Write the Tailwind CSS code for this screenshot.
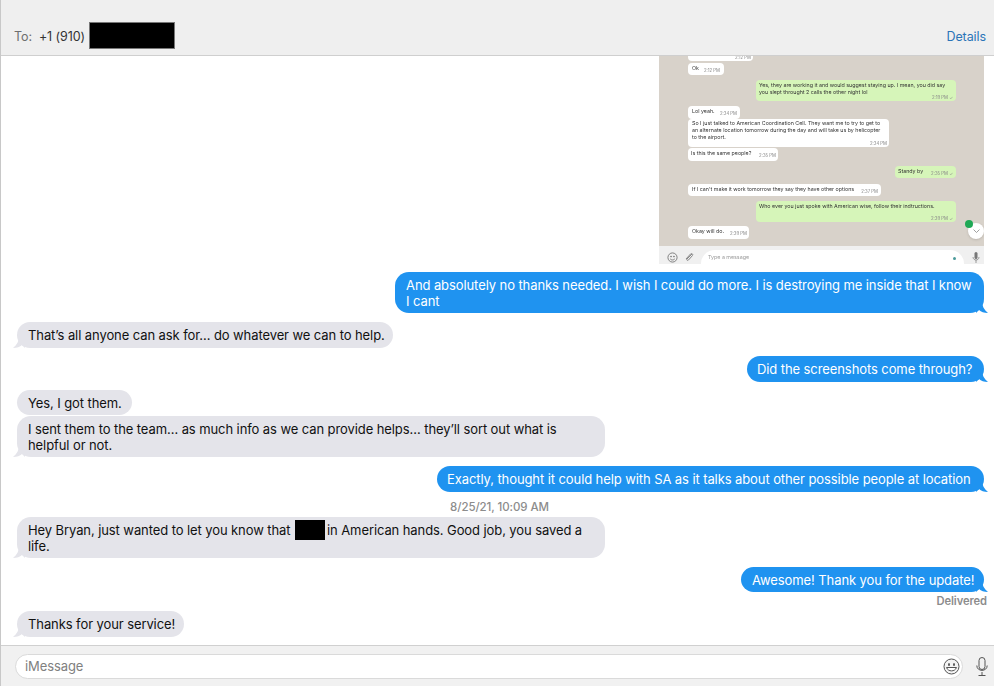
<!DOCTYPE html>
<html lang="en">
<head>
    <meta charset="UTF-8">
    <meta name="viewport" content="width=device-width, initial-scale=1.0">
    <title>Messages</title>
    <script src="https://cdn.jsdelivr.net/npm/@tailwindcss/browser@4"></script>
</head>
<body class="bg-white font-['Inter',sans-serif] text-[13px] leading-[16px] tracking-[-0.09px] text-[#111] overflow-hidden">
<div class="w-[994px] h-[686px] flex flex-col border-l border-[#c8c8c8] overflow-hidden">
    <!-- Header -->
    <header class="h-[56px] shrink-0 bg-[#efefef] border-b border-[#cfcfcf] flex items-end pl-[13px] pr-[8px] pb-[6px]">
        <span class="text-[12.500px] text-[#6e6e6e] mb-[4px] mr-[7px]">To:</span>
        <span class="text-[12.500px] text-[#333] mb-[4px] mr-[4px]">+1 (910)</span>
        <span class="w-[86px] h-[27px] bg-black border border-[#777]"></span>
        <a class="ml-auto text-[12.500px] text-[#2a74b8] mb-[4px]">Details</a>
    </header>

    <!-- Conversation -->
    <main class="h-[589px] shrink-0 flex flex-col pl-[16px] pr-[10px] overflow-hidden">
        <!-- Attached screenshot -->
        <div class="relative self-end w-[325px] h-[208px] shrink-0 bg-[#d8d2ca] overflow-hidden flex flex-col text-[5.300px] leading-[7px] tracking-normal text-[#333] blur-[0.500px]">
            <div class="flex-1 flex flex-col pl-[29px] pr-[28px]">
                <div class="self-start w-[65px] h-[5px] bg-white rounded-b-sm text-right text-[4.300px] leading-[4px] pr-[2px] text-[#888]">2:12 PM</div>
                <div class="self-start mt-[2px] w-[36px] h-[12px] bg-white rounded-sm px-[4px] py-[2px] flex justify-between"><span>Ok</span><span class="text-[4.300px] text-[#888] mt-[2px]">2:12 PM</span></div>
                <div class="self-end mt-[5px] w-[200px] h-[21px] bg-[#d6f5b9] rounded-sm pl-[3px] pt-[2px] relative whitespace-nowrap">Yes, they are working it and would suggest staying up. I mean, you did say<br>you slept throught 2 calls the other night lol<span class="absolute right-[3px] bottom-[1px] text-[4.300px] leading-[5px] text-[#888]">2:19 PM ✓</span></div>
                <div class="self-start mt-[5px] w-[52px] h-[13px] bg-white rounded-sm pl-[4px] pt-[2px] flex justify-between pr-[3px]"><span>Lol yeah.</span><span class="text-[4.300px] text-[#888] mt-[2px]">2:34 PM</span></div>
                <div class="self-start w-[201px] h-[28px] bg-white rounded-sm pl-[4px] pt-[1px] relative whitespace-nowrap">So I just talked to American Coordination Cell. They want me to try to get to<br>an alternate location tomorrow during the day and will take us by helicopter<br>to the airport.<span class="absolute right-[2px] bottom-[1px] text-[4.300px] leading-[5px] text-[#888]">2:34 PM</span></div>
                <div class="self-start mt-[1px] w-[90px] h-[13px] bg-white rounded-sm pl-[3px] pt-[2px] flex justify-between pr-[2px]"><span>Is this the same people?</span><span class="text-[4.300px] text-[#888] mt-[2px]">2:35 PM</span></div>
                <div class="self-end mt-[5px] w-[61px] h-[12px] bg-[#d6f5b9] rounded-sm pl-[3px] pt-[2px] flex justify-between pr-[3px]"><span>Standy by</span><span class="text-[4.300px] text-[#888] mt-[2px]">2:35 PM ✓</span></div>
                <div class="self-start mt-[6px] w-[193px] h-[12px] bg-white rounded-sm pl-[4px] pt-[2px] flex justify-between pr-[3px] whitespace-nowrap"><span>If I can't make it work tomorrow they say they have other options</span><span class="text-[4.300px] text-[#888] mt-[2px]">2:37 PM</span></div>
                <div class="self-end mt-[5px] w-[200px] h-[21px] bg-[#d6f5b9] rounded-sm pl-[3px] pt-[2px] relative whitespace-nowrap">Who ever you just spoke with American wise, follow their indtructions.<span class="absolute right-[3px] bottom-[1px] text-[4.300px] leading-[5px] text-[#888]">2:39 PM ✓</span></div>
                <div class="self-start mt-[4px] w-[61px] h-[13px] bg-white rounded-sm pl-[4px] pt-[2px] flex justify-between pr-[2px]"><span>Okay will do.</span><span class="text-[4.300px] text-[#888] mt-[2px]">2:39 PM</span></div>
            </div>
            <div class="h-[18px] shrink-0 bg-[#f0f0f0] flex items-end pl-[8px]">
                <svg width="11" height="11" viewBox="0 0 12 12" fill="none" stroke="#777" class="mb-[1px]"><circle cx="6" cy="6" r="5"/><circle cx="4.400" cy="5" r=".5" fill="#777"/><circle cx="7.600" cy="5" r=".5" fill="#777"/><path d="M3.500 7.500c1.200 1.600 3.800 1.600 5 0"/></svg>
                <svg width="10" height="10" viewBox="0 0 10 10" fill="none" stroke="#888" class="ml-[6px] mb-[2px]"><path d="M8 2 3 7c-1 1 .5 2 1.500 1l4-4.500c1-1.500-1-2.500-2-1.500L2 7"/></svg>
                <div class="ml-[7px] w-[263px] h-[14px] bg-white rounded-t-full pl-[7px] text-[#999] leading-[14px] relative">Type a message<span class="absolute right-[8px] top-[7px] w-[3px] h-[3px] rounded-full bg-[#4a9a9a]"></span></div>
                <svg width="8" height="11" viewBox="0 0 8 11" fill="#777" class="ml-[8px] mb-[1px]"><rect x="2.500" width="3" height="7" rx="1.500"/><path d="M1 5c0 4 6 4 6 0M4 8v3" fill="none" stroke="#777" stroke-width=".7"/></svg>
            </div>
            <div class="absolute left-[309px] top-[167px] w-[16px] h-[16px] rounded-full bg-white flex items-center justify-center shadow-sm">
                <svg width="7" height="4" viewBox="0 0 7 4" fill="none" stroke="#888" stroke-width=".8"><path d="m.5.500 3 3 3-3"/></svg>
            </div>
            <div class="absolute left-[306px] top-[164px] w-[8px] h-[8px] rounded-full bg-[#1fa855]"></div>
        </div>

        <div class="relative self-end mt-[8px] w-[589px] h-[41px] shrink-0 bg-[#1f93f0] rounded-[14px] text-white px-[11px] py-[5px]">
            And absolutely no thanks needed. I wish I could do more. I is destroying me inside that I know I cant
            <svg class="absolute -right-[4px] bottom-0" width="12" height="12" viewBox="0 0 12 12" fill="#1f93f0"><path d="M0 0h6c0 5 2 9 6 12-4 0-7-1-9-3L0 12z"/></svg>
        </div>

        <div class="relative self-start mt-[9px] w-[376px] h-[26px] shrink-0 bg-[#e4e4ea] rounded-[13px] px-[11px] py-[5px] whitespace-nowrap">
            That’s all anyone can ask for… do whatever we can to help.
            <svg class="absolute -left-[4px] bottom-0" width="12" height="12" viewBox="0 0 12 12" fill="#e4e4ea"><path d="M12 0H6c0 5-2 9-6 12 4 0 7-1 9-3l3 3z"/></svg>
        </div>

        <div class="relative self-end mt-[8px] w-[237px] h-[26px] shrink-0 bg-[#1f93f0] rounded-[13px] text-white px-[10px] py-[5px] whitespace-nowrap">
            Did the screenshots come through?
            <svg class="absolute -right-[4px] bottom-0" width="12" height="12" viewBox="0 0 12 12" fill="#1f93f0"><path d="M0 0h6c0 5 2 9 6 12-4 0-7-1-9-3L0 12z"/></svg>
        </div>

        <div class="self-start mt-[8px] w-[115px] h-[25px] shrink-0 bg-[#e4e4ea] rounded-[13px] px-[11px] py-[5px] whitespace-nowrap">Yes, I got them.</div>

        <div class="relative self-start mt-[1px] w-[588px] h-[41px] shrink-0 bg-[#e4e4ea] rounded-[14px] px-[11px] py-[5px]">
            I sent them to the team… as much info as we can provide helps… they’ll sort out what is helpful or not.
            <svg class="absolute -left-[4px] bottom-0" width="12" height="12" viewBox="0 0 12 12" fill="#e4e4ea"><path d="M12 0H6c0 5-2 9-6 12 4 0 7-1 9-3l3 3z"/></svg>
        </div>

        <div class="relative self-end mt-[9px] w-[547px] h-[26px] shrink-0 bg-[#1f93f0] rounded-[13px] text-white px-[10px] py-[5px] whitespace-nowrap">
            Exactly, thought it could help with SA as it talks about other possible people at location
            <svg class="absolute -right-[4px] bottom-0" width="12" height="12" viewBox="0 0 12 12" fill="#1f93f0"><path d="M0 0h6c0 5 2 9 6 12-4 0-7-1-9-3L0 12z"/></svg>
        </div>

        <div class="mt-[7px] h-[16px] shrink-0 text-center text-[11.500px] font-medium text-[#8c8c8c] pr-[2px]">8/25/21, 10:09 AM</div>

        <div class="relative self-start mt-[2px] w-[588px] h-[41px] shrink-0 bg-[#e4e4ea] rounded-[14px] px-[11px] py-[5px]">
            Hey Bryan, just wanted to let you know that <span class="inline-block w-[30px] h-[20px] -my-[4px] ml-[1px] mr-[2px] bg-black align-[-1px]"></span>in American hands. Good job, you saved a life.
            <svg class="absolute -left-[4px] bottom-0" width="12" height="12" viewBox="0 0 12 12" fill="#e4e4ea"><path d="M12 0H6c0 5-2 9-6 12 4 0 7-1 9-3l3 3z"/></svg>
        </div>

        <div class="relative self-end mt-[9px] w-[243px] h-[25px] shrink-0 bg-[#1f93f0] rounded-[13px] text-white px-[11px] py-[5px] whitespace-nowrap">
            Awesome! Thank you for the update!
            <svg class="absolute -right-[4px] bottom-0" width="12" height="12" viewBox="0 0 12 12" fill="#1f93f0"><path d="M0 0h6c0 5 2 9 6 12-4 0-7-1-9-3L0 12z"/></svg>
        </div>

        <div class="self-end mt-[1px] -mr-[3px] h-[16px] shrink-0 text-[11.200px] font-semibold text-[#8c8c8c]">Delivered</div>

        <div class="relative self-start mt-[2px] w-[167px] h-[26px] shrink-0 bg-[#e4e4ea] rounded-[13px] px-[11px] py-[5px] whitespace-nowrap">
            Thanks for your service!
            <svg class="absolute -left-[4px] bottom-0" width="12" height="12" viewBox="0 0 12 12" fill="#e4e4ea"><path d="M12 0H6c0 5-2 9-6 12 4 0 7-1 9-3l3 3z"/></svg>
        </div>
    </main>

    <!-- Input bar -->
    <footer class="flex-1 bg-[#f1f1f1] border-t border-[#d0d0d0] flex items-center pl-[14px]">
        <div class="w-[948px] h-[25px] bg-white border border-[#dadada] rounded-full flex items-center pl-[9px] pr-[2px] text-[#808080]">
            iMessage
            <svg class="ml-auto" width="17" height="17" viewBox="0 0 17 17" fill="none" stroke="#555"><circle cx="8.500" cy="8.500" r="7.500" fill="#f4f4f4"/><ellipse cx="6" cy="6.500" rx="1" ry="1.500" fill="#555" stroke="none"/><ellipse cx="11" cy="6.500" rx="1" ry="1.500" fill="#555" stroke="none"/><path d="M3.500 9.500c1.500 4.500 8.500 4.500 10 0z" fill="#fff"/></svg>
        </div>
        <svg class="ml-[13px]" width="12" height="19" viewBox="0 0 12 19" fill="none" stroke="#555"><rect x="3" y=".5" width="6" height="12" rx="3"/><path d="M.8 8.500c0 6.500 10.400 6.500 10.400 0M6 15v3.500M2.500 18.500h7"/></svg>
    </footer>
</div>
</body>
</html>
